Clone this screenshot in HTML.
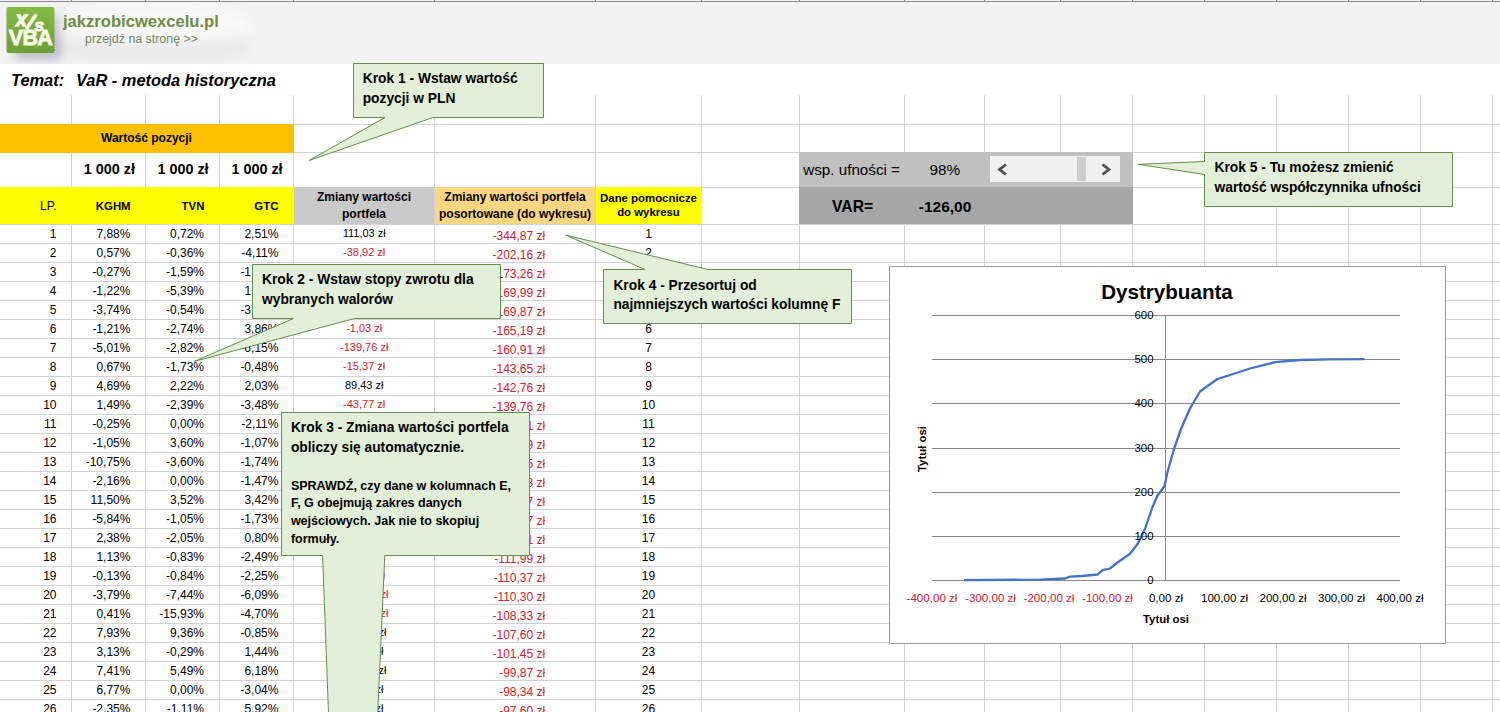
<!DOCTYPE html>
<html><head><meta charset="utf-8"><style>
html,body{margin:0;padding:0;}
body{width:1500px;height:712px;overflow:hidden;position:relative;background:#fff;font-family:"Liberation Sans", sans-serif;color:#000;}
.r{position:absolute;}
.t{position:absolute;white-space:nowrap;}
</style></head><body>
<div class="r" style="left:71px;top:95px;width:1px;height:617px;background:#d2d2d2;"></div>
<div class="r" style="left:145px;top:95px;width:1px;height:617px;background:#d2d2d2;"></div>
<div class="r" style="left:219px;top:95px;width:1px;height:617px;background:#d2d2d2;"></div>
<div class="r" style="left:293px;top:95px;width:1px;height:617px;background:#d2d2d2;"></div>
<div class="r" style="left:434px;top:95px;width:1px;height:617px;background:#d2d2d2;"></div>
<div class="r" style="left:595px;top:95px;width:1px;height:617px;background:#d2d2d2;"></div>
<div class="r" style="left:701px;top:95px;width:1px;height:617px;background:#d2d2d2;"></div>
<div class="r" style="left:799px;top:95px;width:1px;height:617px;background:#d2d2d2;"></div>
<div class="r" style="left:904px;top:95px;width:1px;height:617px;background:#d2d2d2;"></div>
<div class="r" style="left:984px;top:95px;width:1px;height:617px;background:#d2d2d2;"></div>
<div class="r" style="left:1060px;top:95px;width:1px;height:617px;background:#d2d2d2;"></div>
<div class="r" style="left:1132px;top:95px;width:1px;height:617px;background:#d2d2d2;"></div>
<div class="r" style="left:1204px;top:95px;width:1px;height:617px;background:#d2d2d2;"></div>
<div class="r" style="left:1276px;top:95px;width:1px;height:617px;background:#d2d2d2;"></div>
<div class="r" style="left:1348px;top:95px;width:1px;height:617px;background:#d2d2d2;"></div>
<div class="r" style="left:1420px;top:95px;width:1px;height:617px;background:#d2d2d2;"></div>
<div class="r" style="left:1492px;top:95px;width:1px;height:617px;background:#d2d2d2;"></div>
<div class="r" style="left:0px;top:124px;width:1500px;height:1px;background:#d2d2d2;"></div>
<div class="r" style="left:0px;top:152px;width:1500px;height:1px;background:#d2d2d2;"></div>
<div class="r" style="left:0px;top:187px;width:1500px;height:1px;background:#d2d2d2;"></div>
<div class="r" style="left:0px;top:224px;width:1500px;height:1px;background:#d2d2d2;"></div>
<div class="r" style="left:0px;top:243px;width:1500px;height:1px;background:#d2d2d2;"></div>
<div class="r" style="left:0px;top:262px;width:1500px;height:1px;background:#d2d2d2;"></div>
<div class="r" style="left:0px;top:281px;width:1500px;height:1px;background:#d2d2d2;"></div>
<div class="r" style="left:0px;top:300px;width:1500px;height:1px;background:#d2d2d2;"></div>
<div class="r" style="left:0px;top:319px;width:1500px;height:1px;background:#d2d2d2;"></div>
<div class="r" style="left:0px;top:338px;width:1500px;height:1px;background:#d2d2d2;"></div>
<div class="r" style="left:0px;top:357px;width:1500px;height:1px;background:#d2d2d2;"></div>
<div class="r" style="left:0px;top:376px;width:1500px;height:1px;background:#d2d2d2;"></div>
<div class="r" style="left:0px;top:395px;width:1500px;height:1px;background:#d2d2d2;"></div>
<div class="r" style="left:0px;top:414px;width:1500px;height:1px;background:#d2d2d2;"></div>
<div class="r" style="left:0px;top:433px;width:1500px;height:1px;background:#d2d2d2;"></div>
<div class="r" style="left:0px;top:452px;width:1500px;height:1px;background:#d2d2d2;"></div>
<div class="r" style="left:0px;top:471px;width:1500px;height:1px;background:#d2d2d2;"></div>
<div class="r" style="left:0px;top:490px;width:1500px;height:1px;background:#d2d2d2;"></div>
<div class="r" style="left:0px;top:509px;width:1500px;height:1px;background:#d2d2d2;"></div>
<div class="r" style="left:0px;top:528px;width:1500px;height:1px;background:#d2d2d2;"></div>
<div class="r" style="left:0px;top:547px;width:1500px;height:1px;background:#d2d2d2;"></div>
<div class="r" style="left:0px;top:566px;width:1500px;height:1px;background:#d2d2d2;"></div>
<div class="r" style="left:0px;top:585px;width:1500px;height:1px;background:#d2d2d2;"></div>
<div class="r" style="left:0px;top:604px;width:1500px;height:1px;background:#d2d2d2;"></div>
<div class="r" style="left:0px;top:623px;width:1500px;height:1px;background:#d2d2d2;"></div>
<div class="r" style="left:0px;top:642px;width:1500px;height:1px;background:#d2d2d2;"></div>
<div class="r" style="left:0px;top:661px;width:1500px;height:1px;background:#d2d2d2;"></div>
<div class="r" style="left:0px;top:680px;width:1500px;height:1px;background:#d2d2d2;"></div>
<div class="r" style="left:0px;top:699px;width:1500px;height:1px;background:#d2d2d2;"></div>
<div class="r" style="left:0px;top:0px;width:1500px;height:64px;background:#f2f2f2;"></div>
<div class="r" style="left:0px;top:1px;width:1500px;height:1px;background:#8c8c8c;"></div>
<div class="r" style="left:71px;top:0px;width:1px;height:2px;background:#8c8c8c;"></div>
<div class="r" style="left:145px;top:0px;width:1px;height:2px;background:#8c8c8c;"></div>
<div class="r" style="left:219px;top:0px;width:1px;height:2px;background:#8c8c8c;"></div>
<div class="r" style="left:293px;top:0px;width:1px;height:2px;background:#8c8c8c;"></div>
<div class="r" style="left:434px;top:0px;width:1px;height:2px;background:#8c8c8c;"></div>
<div class="r" style="left:595px;top:0px;width:1px;height:2px;background:#8c8c8c;"></div>
<div class="r" style="left:701px;top:0px;width:1px;height:2px;background:#8c8c8c;"></div>
<div class="r" style="left:799px;top:0px;width:1px;height:2px;background:#8c8c8c;"></div>
<div class="r" style="left:904px;top:0px;width:1px;height:2px;background:#8c8c8c;"></div>
<div class="r" style="left:984px;top:0px;width:1px;height:2px;background:#8c8c8c;"></div>
<div class="r" style="left:1060px;top:0px;width:1px;height:2px;background:#8c8c8c;"></div>
<div class="r" style="left:1132px;top:0px;width:1px;height:2px;background:#8c8c8c;"></div>
<div class="r" style="left:1204px;top:0px;width:1px;height:2px;background:#8c8c8c;"></div>
<div class="r" style="left:1276px;top:0px;width:1px;height:2px;background:#8c8c8c;"></div>
<div class="r" style="left:1348px;top:0px;width:1px;height:2px;background:#8c8c8c;"></div>
<div class="r" style="left:1420px;top:0px;width:1px;height:2px;background:#8c8c8c;"></div>
<div class="r" style="left:1492px;top:0px;width:1px;height:2px;background:#8c8c8c;"></div>
<div class="r" style="left:0px;top:124px;width:294px;height:29px;background:#ffc000;"></div>
<div class="r" style="left:0px;top:187px;width:294px;height:37px;background:#ffff00;"></div>
<div class="r" style="left:294px;top:187px;width:140px;height:37px;background:#c9c9c9;"></div>
<div class="r" style="left:435px;top:187px;width:160px;height:37px;background:#fbd57f;"></div>
<div class="r" style="left:596px;top:187px;width:106px;height:37px;background:#ffff00;"></div>
<div class="r" style="left:799px;top:152px;width:334px;height:35px;background:#c0c0c0;"></div>
<div class="r" style="left:799px;top:187px;width:334px;height:37px;background:#a6a6a6;"></div>
<div class="r" style="left:0;top:2px;width:1500px;height:62px;overflow:hidden;"><div style="position:absolute;left:14px;top:14px;width:48px;height:44px;border-radius:6px;background:rgba(110,110,150,0.38);filter:blur(5px);"></div><div style="position:absolute;left:60px;top:30px;width:190px;height:26px;border-radius:50%;background:rgba(140,140,140,0.12);filter:blur(8px);"></div><div style="position:absolute;left:55px;top:4px;width:200px;height:40px;border-radius:50%;background:rgba(255,255,255,0.6);filter:blur(8px);"></div></div>
<svg class="r" style="left:0;top:0" width="70" height="64"><defs><linearGradient id="lgG" x1="0" y1="0" x2="0" y2="1"><stop offset="0" stop-color="#86b846"/><stop offset="1" stop-color="#6f9f38"/></linearGradient></defs><rect x="6.5" y="7" width="48" height="46" rx="2.5" fill="url(#lgG)"/></svg>
<svg class="r" style="left:0;top:0" width="70" height="64"><text x="16" y="25.8" font-family="Liberation Sans" font-weight="bold" font-style="italic" font-size="19.5" fill="#f7fbe6" stroke="#f7fbe6" stroke-width="1.3">x</text><line x1="26.3" y1="29" x2="36.2" y2="14.5" stroke="#f7fbe6" stroke-width="3.6"/><text x="34.5" y="31" font-family="Liberation Sans" font-weight="bold" font-style="italic" font-size="17" fill="#f7fbe6" stroke="#f7fbe6" stroke-width="1.1">s</text><text x="30.5" y="44.7" text-anchor="middle" font-family="Liberation Sans" font-weight="bold" font-size="21.5" letter-spacing="-0.6" fill="#f7fbe6" stroke="#f7fbe6" stroke-width="0.8">VBA</text></svg>
<div class="t" style="top:12.25px;font-size:16.6px;line-height:20px;font-weight:bold;color:#6f8c40;left:63.00px;">jakzrobicwexcelu.pl</div>
<div class="t" style="top:32.20px;font-size:12.4px;line-height:15px;color:#718563;left:85.00px;">przejdź na stronę &gt;&gt;</div>
<div class="t" style="top:70.32px;font-size:16.4px;line-height:20px;font-weight:bold;font-style:italic;left:11.00px;">Temat:</div>
<div class="t" style="top:70.32px;font-size:16.4px;line-height:20px;font-weight:bold;font-style:italic;left:76.00px;">VaR - metoda historyczna</div>
<div class="t" style="top:130.84px;font-size:12px;line-height:14px;font-weight:bold;left:-153.50px;width:600px;text-align:center;">Wartość pozycji</div>
<div class="t" style="top:161.31px;font-size:14.4px;line-height:17px;font-weight:bold;right:1365.00px;text-align:right;">1 000 zł</div>
<div class="t" style="top:161.31px;font-size:14.4px;line-height:17px;font-weight:bold;right:1291.40px;text-align:right;">1 000 zł</div>
<div class="t" style="top:161.31px;font-size:14.4px;line-height:17px;font-weight:bold;right:1217.40px;text-align:right;">1 000 zł</div>
<div class="t" style="top:198.64px;font-size:12px;line-height:14px;right:1443.50px;text-align:right;">LP.</div>
<div class="t" style="top:198.75px;font-size:11.4px;line-height:14px;font-weight:bold;right:1369.40px;text-align:right;">KGHM</div>
<div class="t" style="top:198.75px;font-size:11.4px;line-height:14px;font-weight:bold;right:1295.60px;text-align:right;">TVN</div>
<div class="t" style="top:198.75px;font-size:11.4px;line-height:14px;font-weight:bold;right:1221.60px;text-align:right;">GTC</div>
<div class="t" style="top:190.34px;font-size:12px;line-height:14px;font-weight:bold;left:64.00px;width:600px;text-align:center;">Zmiany wartości</div>
<div class="t" style="top:207.34px;font-size:12px;line-height:14px;font-weight:bold;left:64.00px;width:600px;text-align:center;">portfela</div>
<div class="t" style="top:190.14px;font-size:12px;line-height:14px;font-weight:bold;left:215.00px;width:600px;text-align:center;">Zmiany wartości portfela</div>
<div class="t" style="top:207.04px;font-size:12px;line-height:14px;font-weight:bold;left:215.00px;width:600px;text-align:center;">posortowane (do wykresu)</div>
<div class="t" style="top:190.85px;font-size:11.4px;line-height:14px;font-weight:bold;left:348.50px;width:600px;text-align:center;">Dane pomocnicze</div>
<div class="t" style="top:205.25px;font-size:11.4px;line-height:14px;font-weight:bold;left:348.50px;width:600px;text-align:center;">do wykresu</div>
<div class="t" style="top:226.64px;font-size:12px;line-height:14px;right:1443.50px;text-align:right;">1</div>
<div class="t" style="top:226.64px;font-size:12px;line-height:14px;right:1369.60px;text-align:right;">7,88%</div>
<div class="t" style="top:226.64px;font-size:12px;line-height:14px;right:1296.00px;text-align:right;">0,72%</div>
<div class="t" style="top:226.64px;font-size:12px;line-height:14px;right:1221.60px;text-align:right;">2,51%</div>
<div class="t" style="top:227.19px;font-size:11px;line-height:13px;left:64.20px;width:600px;text-align:center;">111,03 zł</div>
<div class="t" style="top:228.64px;font-size:12px;line-height:14px;color:#cf2330;right:954.80px;text-align:right;">-344,87 zł</div>
<div class="t" style="top:226.64px;font-size:12px;line-height:14px;left:348.50px;width:600px;text-align:center;">1</div>
<div class="t" style="top:245.64px;font-size:12px;line-height:14px;right:1443.50px;text-align:right;">2</div>
<div class="t" style="top:245.64px;font-size:12px;line-height:14px;right:1369.60px;text-align:right;">0,57%</div>
<div class="t" style="top:245.64px;font-size:12px;line-height:14px;right:1296.00px;text-align:right;">-0,36%</div>
<div class="t" style="top:245.64px;font-size:12px;line-height:14px;right:1221.60px;text-align:right;">-4,11%</div>
<div class="t" style="top:246.19px;font-size:11px;line-height:13px;color:#cf2330;left:64.20px;width:600px;text-align:center;">-38,92 zł</div>
<div class="t" style="top:247.64px;font-size:12px;line-height:14px;color:#cf2330;right:954.80px;text-align:right;">-202,16 zł</div>
<div class="t" style="top:245.64px;font-size:12px;line-height:14px;left:348.50px;width:600px;text-align:center;">2</div>
<div class="t" style="top:264.64px;font-size:12px;line-height:14px;right:1443.50px;text-align:right;">3</div>
<div class="t" style="top:264.64px;font-size:12px;line-height:14px;right:1369.60px;text-align:right;">-0,27%</div>
<div class="t" style="top:264.64px;font-size:12px;line-height:14px;right:1296.00px;text-align:right;">-1,59%</div>
<div class="t" style="top:264.64px;font-size:12px;line-height:14px;right:1221.60px;text-align:right;">-1,52%</div>
<div class="t" style="top:265.19px;font-size:11px;line-height:13px;color:#cf2330;left:64.20px;width:600px;text-align:center;">-33,80 zł</div>
<div class="t" style="top:266.64px;font-size:12px;line-height:14px;color:#cf2330;right:954.80px;text-align:right;">-173,26 zł</div>
<div class="t" style="top:264.64px;font-size:12px;line-height:14px;left:348.50px;width:600px;text-align:center;">3</div>
<div class="t" style="top:283.64px;font-size:12px;line-height:14px;right:1443.50px;text-align:right;">4</div>
<div class="t" style="top:283.64px;font-size:12px;line-height:14px;right:1369.60px;text-align:right;">-1,22%</div>
<div class="t" style="top:283.64px;font-size:12px;line-height:14px;right:1296.00px;text-align:right;">-5,39%</div>
<div class="t" style="top:283.64px;font-size:12px;line-height:14px;right:1221.60px;text-align:right;">1,26%</div>
<div class="t" style="top:284.19px;font-size:11px;line-height:13px;color:#cf2330;left:64.20px;width:600px;text-align:center;">-53,50 zł</div>
<div class="t" style="top:285.64px;font-size:12px;line-height:14px;color:#cf2330;right:954.80px;text-align:right;">-169,99 zł</div>
<div class="t" style="top:283.64px;font-size:12px;line-height:14px;left:348.50px;width:600px;text-align:center;">4</div>
<div class="t" style="top:302.64px;font-size:12px;line-height:14px;right:1443.50px;text-align:right;">5</div>
<div class="t" style="top:302.64px;font-size:12px;line-height:14px;right:1369.60px;text-align:right;">-3,74%</div>
<div class="t" style="top:302.64px;font-size:12px;line-height:14px;right:1296.00px;text-align:right;">-0,54%</div>
<div class="t" style="top:302.64px;font-size:12px;line-height:14px;right:1221.60px;text-align:right;">-3,04%</div>
<div class="t" style="top:303.19px;font-size:11px;line-height:13px;color:#cf2330;left:64.20px;width:600px;text-align:center;">-73,20 zł</div>
<div class="t" style="top:304.64px;font-size:12px;line-height:14px;color:#cf2330;right:954.80px;text-align:right;">-169,87 zł</div>
<div class="t" style="top:302.64px;font-size:12px;line-height:14px;left:348.50px;width:600px;text-align:center;">5</div>
<div class="t" style="top:321.64px;font-size:12px;line-height:14px;right:1443.50px;text-align:right;">6</div>
<div class="t" style="top:321.64px;font-size:12px;line-height:14px;right:1369.60px;text-align:right;">-1,21%</div>
<div class="t" style="top:321.64px;font-size:12px;line-height:14px;right:1296.00px;text-align:right;">-2,74%</div>
<div class="t" style="top:321.64px;font-size:12px;line-height:14px;right:1221.60px;text-align:right;">3,86%</div>
<div class="t" style="top:322.19px;font-size:11px;line-height:13px;color:#cf2330;left:64.20px;width:600px;text-align:center;">-1,03 zł</div>
<div class="t" style="top:323.64px;font-size:12px;line-height:14px;color:#cf2330;right:954.80px;text-align:right;">-165,19 zł</div>
<div class="t" style="top:321.64px;font-size:12px;line-height:14px;left:348.50px;width:600px;text-align:center;">6</div>
<div class="t" style="top:340.64px;font-size:12px;line-height:14px;right:1443.50px;text-align:right;">7</div>
<div class="t" style="top:340.64px;font-size:12px;line-height:14px;right:1369.60px;text-align:right;">-5,01%</div>
<div class="t" style="top:340.64px;font-size:12px;line-height:14px;right:1296.00px;text-align:right;">-2,82%</div>
<div class="t" style="top:340.64px;font-size:12px;line-height:14px;right:1221.60px;text-align:right;">-6,15%</div>
<div class="t" style="top:341.19px;font-size:11px;line-height:13px;color:#cf2330;left:64.20px;width:600px;text-align:center;">-139,76 zł</div>
<div class="t" style="top:342.64px;font-size:12px;line-height:14px;color:#cf2330;right:954.80px;text-align:right;">-160,91 zł</div>
<div class="t" style="top:340.64px;font-size:12px;line-height:14px;left:348.50px;width:600px;text-align:center;">7</div>
<div class="t" style="top:359.64px;font-size:12px;line-height:14px;right:1443.50px;text-align:right;">8</div>
<div class="t" style="top:359.64px;font-size:12px;line-height:14px;right:1369.60px;text-align:right;">0,67%</div>
<div class="t" style="top:359.64px;font-size:12px;line-height:14px;right:1296.00px;text-align:right;">-1,73%</div>
<div class="t" style="top:359.64px;font-size:12px;line-height:14px;right:1221.60px;text-align:right;">-0,48%</div>
<div class="t" style="top:360.19px;font-size:11px;line-height:13px;color:#cf2330;left:64.20px;width:600px;text-align:center;">-15,37 zł</div>
<div class="t" style="top:361.64px;font-size:12px;line-height:14px;color:#cf2330;right:954.80px;text-align:right;">-143,65 zł</div>
<div class="t" style="top:359.64px;font-size:12px;line-height:14px;left:348.50px;width:600px;text-align:center;">8</div>
<div class="t" style="top:378.64px;font-size:12px;line-height:14px;right:1443.50px;text-align:right;">9</div>
<div class="t" style="top:378.64px;font-size:12px;line-height:14px;right:1369.60px;text-align:right;">4,69%</div>
<div class="t" style="top:378.64px;font-size:12px;line-height:14px;right:1296.00px;text-align:right;">2,22%</div>
<div class="t" style="top:378.64px;font-size:12px;line-height:14px;right:1221.60px;text-align:right;">2,03%</div>
<div class="t" style="top:379.19px;font-size:11px;line-height:13px;left:64.20px;width:600px;text-align:center;">89,43 zł</div>
<div class="t" style="top:380.64px;font-size:12px;line-height:14px;color:#cf2330;right:954.80px;text-align:right;">-142,76 zł</div>
<div class="t" style="top:378.64px;font-size:12px;line-height:14px;left:348.50px;width:600px;text-align:center;">9</div>
<div class="t" style="top:397.64px;font-size:12px;line-height:14px;right:1443.50px;text-align:right;">10</div>
<div class="t" style="top:397.64px;font-size:12px;line-height:14px;right:1369.60px;text-align:right;">1,49%</div>
<div class="t" style="top:397.64px;font-size:12px;line-height:14px;right:1296.00px;text-align:right;">-2,39%</div>
<div class="t" style="top:397.64px;font-size:12px;line-height:14px;right:1221.60px;text-align:right;">-3,48%</div>
<div class="t" style="top:398.19px;font-size:11px;line-height:13px;color:#cf2330;left:64.20px;width:600px;text-align:center;">-43,77 zł</div>
<div class="t" style="top:399.64px;font-size:12px;line-height:14px;color:#cf2330;right:954.80px;text-align:right;">-139,76 zł</div>
<div class="t" style="top:397.64px;font-size:12px;line-height:14px;left:348.50px;width:600px;text-align:center;">10</div>
<div class="t" style="top:416.64px;font-size:12px;line-height:14px;right:1443.50px;text-align:right;">11</div>
<div class="t" style="top:416.64px;font-size:12px;line-height:14px;right:1369.60px;text-align:right;">-0,25%</div>
<div class="t" style="top:416.64px;font-size:12px;line-height:14px;right:1296.00px;text-align:right;">0,00%</div>
<div class="t" style="top:416.64px;font-size:12px;line-height:14px;right:1221.60px;text-align:right;">-2,11%</div>
<div class="t" style="top:417.19px;font-size:11px;line-height:13px;color:#cf2330;left:64.20px;width:600px;text-align:center;">-23,60 zł</div>
<div class="t" style="top:418.64px;font-size:12px;line-height:14px;color:#cf2330;right:954.80px;text-align:right;">-136,41 zł</div>
<div class="t" style="top:416.64px;font-size:12px;line-height:14px;left:348.50px;width:600px;text-align:center;">11</div>
<div class="t" style="top:435.64px;font-size:12px;line-height:14px;right:1443.50px;text-align:right;">12</div>
<div class="t" style="top:435.64px;font-size:12px;line-height:14px;right:1369.60px;text-align:right;">-1,05%</div>
<div class="t" style="top:435.64px;font-size:12px;line-height:14px;right:1296.00px;text-align:right;">3,60%</div>
<div class="t" style="top:435.64px;font-size:12px;line-height:14px;right:1221.60px;text-align:right;">-1,07%</div>
<div class="t" style="top:436.19px;font-size:11px;line-height:13px;left:64.20px;width:600px;text-align:center;">14,80 zł</div>
<div class="t" style="top:437.64px;font-size:12px;line-height:14px;color:#cf2330;right:954.80px;text-align:right;">-133,19 zł</div>
<div class="t" style="top:435.64px;font-size:12px;line-height:14px;left:348.50px;width:600px;text-align:center;">12</div>
<div class="t" style="top:454.64px;font-size:12px;line-height:14px;right:1443.50px;text-align:right;">13</div>
<div class="t" style="top:454.64px;font-size:12px;line-height:14px;right:1369.60px;text-align:right;">-10,75%</div>
<div class="t" style="top:454.64px;font-size:12px;line-height:14px;right:1296.00px;text-align:right;">-3,60%</div>
<div class="t" style="top:454.64px;font-size:12px;line-height:14px;right:1221.60px;text-align:right;">-1,74%</div>
<div class="t" style="top:455.19px;font-size:11px;line-height:13px;color:#cf2330;left:64.20px;width:600px;text-align:center;">-160,90 zł</div>
<div class="t" style="top:456.64px;font-size:12px;line-height:14px;color:#cf2330;right:954.80px;text-align:right;">-129,05 zł</div>
<div class="t" style="top:454.64px;font-size:12px;line-height:14px;left:348.50px;width:600px;text-align:center;">13</div>
<div class="t" style="top:473.64px;font-size:12px;line-height:14px;right:1443.50px;text-align:right;">14</div>
<div class="t" style="top:473.64px;font-size:12px;line-height:14px;right:1369.60px;text-align:right;">-2,16%</div>
<div class="t" style="top:473.64px;font-size:12px;line-height:14px;right:1296.00px;text-align:right;">0,00%</div>
<div class="t" style="top:473.64px;font-size:12px;line-height:14px;right:1221.60px;text-align:right;">-1,47%</div>
<div class="t" style="top:474.19px;font-size:11px;line-height:13px;color:#cf2330;left:64.20px;width:600px;text-align:center;">-36,30 zł</div>
<div class="t" style="top:475.64px;font-size:12px;line-height:14px;color:#cf2330;right:954.80px;text-align:right;">-127,33 zł</div>
<div class="t" style="top:473.64px;font-size:12px;line-height:14px;left:348.50px;width:600px;text-align:center;">14</div>
<div class="t" style="top:492.64px;font-size:12px;line-height:14px;right:1443.50px;text-align:right;">15</div>
<div class="t" style="top:492.64px;font-size:12px;line-height:14px;right:1369.60px;text-align:right;">11,50%</div>
<div class="t" style="top:492.64px;font-size:12px;line-height:14px;right:1296.00px;text-align:right;">3,52%</div>
<div class="t" style="top:492.64px;font-size:12px;line-height:14px;right:1221.60px;text-align:right;">3,42%</div>
<div class="t" style="top:493.19px;font-size:11px;line-height:13px;left:64.20px;width:600px;text-align:center;">184,40 zł</div>
<div class="t" style="top:494.64px;font-size:12px;line-height:14px;color:#cf2330;right:954.80px;text-align:right;">-121,47 zł</div>
<div class="t" style="top:492.64px;font-size:12px;line-height:14px;left:348.50px;width:600px;text-align:center;">15</div>
<div class="t" style="top:511.64px;font-size:12px;line-height:14px;right:1443.50px;text-align:right;">16</div>
<div class="t" style="top:511.64px;font-size:12px;line-height:14px;right:1369.60px;text-align:right;">-5,84%</div>
<div class="t" style="top:511.64px;font-size:12px;line-height:14px;right:1296.00px;text-align:right;">-1,05%</div>
<div class="t" style="top:511.64px;font-size:12px;line-height:14px;right:1221.60px;text-align:right;">-1,73%</div>
<div class="t" style="top:512.19px;font-size:11px;line-height:13px;color:#cf2330;left:64.20px;width:600px;text-align:center;">-86,20 zł</div>
<div class="t" style="top:513.64px;font-size:12px;line-height:14px;color:#cf2330;right:954.80px;text-align:right;">-117,57 zł</div>
<div class="t" style="top:511.64px;font-size:12px;line-height:14px;left:348.50px;width:600px;text-align:center;">16</div>
<div class="t" style="top:530.64px;font-size:12px;line-height:14px;right:1443.50px;text-align:right;">17</div>
<div class="t" style="top:530.64px;font-size:12px;line-height:14px;right:1369.60px;text-align:right;">2,38%</div>
<div class="t" style="top:530.64px;font-size:12px;line-height:14px;right:1296.00px;text-align:right;">-2,05%</div>
<div class="t" style="top:530.64px;font-size:12px;line-height:14px;right:1221.60px;text-align:right;">0,80%</div>
<div class="t" style="top:531.19px;font-size:11px;line-height:13px;left:64.20px;width:600px;text-align:center;">11,30 zł</div>
<div class="t" style="top:532.64px;font-size:12px;line-height:14px;color:#cf2330;right:954.80px;text-align:right;">-114,21 zł</div>
<div class="t" style="top:530.64px;font-size:12px;line-height:14px;left:348.50px;width:600px;text-align:center;">17</div>
<div class="t" style="top:549.64px;font-size:12px;line-height:14px;right:1443.50px;text-align:right;">18</div>
<div class="t" style="top:549.64px;font-size:12px;line-height:14px;right:1369.60px;text-align:right;">1,13%</div>
<div class="t" style="top:549.64px;font-size:12px;line-height:14px;right:1296.00px;text-align:right;">-0,83%</div>
<div class="t" style="top:549.64px;font-size:12px;line-height:14px;right:1221.60px;text-align:right;">-2,49%</div>
<div class="t" style="top:550.19px;font-size:11px;line-height:13px;color:#cf2330;left:64.20px;width:600px;text-align:center;">-21,90 zł</div>
<div class="t" style="top:551.64px;font-size:12px;line-height:14px;color:#cf2330;right:954.80px;text-align:right;">-111,99 zł</div>
<div class="t" style="top:549.64px;font-size:12px;line-height:14px;left:348.50px;width:600px;text-align:center;">18</div>
<div class="t" style="top:568.64px;font-size:12px;line-height:14px;right:1443.50px;text-align:right;">19</div>
<div class="t" style="top:568.64px;font-size:12px;line-height:14px;right:1369.60px;text-align:right;">-0,13%</div>
<div class="t" style="top:568.64px;font-size:12px;line-height:14px;right:1296.00px;text-align:right;">-0,84%</div>
<div class="t" style="top:568.64px;font-size:12px;line-height:14px;right:1221.60px;text-align:right;">-2,25%</div>
<div class="t" style="top:569.19px;font-size:11px;line-height:13px;color:#cf2330;left:64.20px;width:600px;text-align:center;">-32,20 zł</div>
<div class="t" style="top:570.64px;font-size:12px;line-height:14px;color:#cf2330;right:954.80px;text-align:right;">-110,37 zł</div>
<div class="t" style="top:568.64px;font-size:12px;line-height:14px;left:348.50px;width:600px;text-align:center;">19</div>
<div class="t" style="top:587.64px;font-size:12px;line-height:14px;right:1443.50px;text-align:right;">20</div>
<div class="t" style="top:587.64px;font-size:12px;line-height:14px;right:1369.60px;text-align:right;">-3,79%</div>
<div class="t" style="top:587.64px;font-size:12px;line-height:14px;right:1296.00px;text-align:right;">-7,44%</div>
<div class="t" style="top:587.64px;font-size:12px;line-height:14px;right:1221.60px;text-align:right;">-6,09%</div>
<div class="t" style="top:588.19px;font-size:11px;line-height:13px;color:#cf2330;left:64.20px;width:600px;text-align:center;">-173,20 zł</div>
<div class="t" style="top:589.64px;font-size:12px;line-height:14px;color:#cf2330;right:954.80px;text-align:right;">-110,30 zł</div>
<div class="t" style="top:587.64px;font-size:12px;line-height:14px;left:348.50px;width:600px;text-align:center;">20</div>
<div class="t" style="top:606.64px;font-size:12px;line-height:14px;right:1443.50px;text-align:right;">21</div>
<div class="t" style="top:606.64px;font-size:12px;line-height:14px;right:1369.60px;text-align:right;">0,41%</div>
<div class="t" style="top:606.64px;font-size:12px;line-height:14px;right:1296.00px;text-align:right;">-15,93%</div>
<div class="t" style="top:606.64px;font-size:12px;line-height:14px;right:1221.60px;text-align:right;">-4,70%</div>
<div class="t" style="top:607.19px;font-size:11px;line-height:13px;color:#cf2330;left:64.20px;width:600px;text-align:center;">-202,20 zł</div>
<div class="t" style="top:608.64px;font-size:12px;line-height:14px;color:#cf2330;right:954.80px;text-align:right;">-108,33 zł</div>
<div class="t" style="top:606.64px;font-size:12px;line-height:14px;left:348.50px;width:600px;text-align:center;">21</div>
<div class="t" style="top:625.64px;font-size:12px;line-height:14px;right:1443.50px;text-align:right;">22</div>
<div class="t" style="top:625.64px;font-size:12px;line-height:14px;right:1369.60px;text-align:right;">7,93%</div>
<div class="t" style="top:625.64px;font-size:12px;line-height:14px;right:1296.00px;text-align:right;">9,36%</div>
<div class="t" style="top:625.64px;font-size:12px;line-height:14px;right:1221.60px;text-align:right;">-0,85%</div>
<div class="t" style="top:626.19px;font-size:11px;line-height:13px;left:64.20px;width:600px;text-align:center;">164,40 zł</div>
<div class="t" style="top:627.64px;font-size:12px;line-height:14px;color:#cf2330;right:954.80px;text-align:right;">-107,60 zł</div>
<div class="t" style="top:625.64px;font-size:12px;line-height:14px;left:348.50px;width:600px;text-align:center;">22</div>
<div class="t" style="top:644.64px;font-size:12px;line-height:14px;right:1443.50px;text-align:right;">23</div>
<div class="t" style="top:644.64px;font-size:12px;line-height:14px;right:1369.60px;text-align:right;">3,13%</div>
<div class="t" style="top:644.64px;font-size:12px;line-height:14px;right:1296.00px;text-align:right;">-0,29%</div>
<div class="t" style="top:644.64px;font-size:12px;line-height:14px;right:1221.60px;text-align:right;">1,44%</div>
<div class="t" style="top:645.19px;font-size:11px;line-height:13px;left:64.20px;width:600px;text-align:center;">42,80 zł</div>
<div class="t" style="top:646.64px;font-size:12px;line-height:14px;color:#cf2330;right:954.80px;text-align:right;">-101,45 zł</div>
<div class="t" style="top:644.64px;font-size:12px;line-height:14px;left:348.50px;width:600px;text-align:center;">23</div>
<div class="t" style="top:663.64px;font-size:12px;line-height:14px;right:1443.50px;text-align:right;">24</div>
<div class="t" style="top:663.64px;font-size:12px;line-height:14px;right:1369.60px;text-align:right;">7,41%</div>
<div class="t" style="top:663.64px;font-size:12px;line-height:14px;right:1296.00px;text-align:right;">5,49%</div>
<div class="t" style="top:663.64px;font-size:12px;line-height:14px;right:1221.60px;text-align:right;">6,18%</div>
<div class="t" style="top:664.19px;font-size:11px;line-height:13px;left:64.20px;width:600px;text-align:center;">190,80 zł</div>
<div class="t" style="top:665.64px;font-size:12px;line-height:14px;color:#cf2330;right:954.80px;text-align:right;">-99,87 zł</div>
<div class="t" style="top:663.64px;font-size:12px;line-height:14px;left:348.50px;width:600px;text-align:center;">24</div>
<div class="t" style="top:682.64px;font-size:12px;line-height:14px;right:1443.50px;text-align:right;">25</div>
<div class="t" style="top:682.64px;font-size:12px;line-height:14px;right:1369.60px;text-align:right;">6,77%</div>
<div class="t" style="top:682.64px;font-size:12px;line-height:14px;right:1296.00px;text-align:right;">0,00%</div>
<div class="t" style="top:682.64px;font-size:12px;line-height:14px;right:1221.60px;text-align:right;">-3,04%</div>
<div class="t" style="top:683.19px;font-size:11px;line-height:13px;left:64.20px;width:600px;text-align:center;">37,30 zł</div>
<div class="t" style="top:684.64px;font-size:12px;line-height:14px;color:#cf2330;right:954.80px;text-align:right;">-98,34 zł</div>
<div class="t" style="top:682.64px;font-size:12px;line-height:14px;left:348.50px;width:600px;text-align:center;">25</div>
<div class="t" style="top:701.64px;font-size:12px;line-height:14px;right:1443.50px;text-align:right;">26</div>
<div class="t" style="top:701.64px;font-size:12px;line-height:14px;right:1369.60px;text-align:right;">-2,35%</div>
<div class="t" style="top:701.64px;font-size:12px;line-height:14px;right:1296.00px;text-align:right;">-1,11%</div>
<div class="t" style="top:701.64px;font-size:12px;line-height:14px;right:1221.60px;text-align:right;">5,92%</div>
<div class="t" style="top:702.19px;font-size:11px;line-height:13px;left:64.20px;width:600px;text-align:center;">24,60 zł</div>
<div class="t" style="top:703.64px;font-size:12px;line-height:14px;color:#cf2330;right:954.80px;text-align:right;">-97,60 zł</div>
<div class="t" style="top:701.64px;font-size:12px;line-height:14px;left:348.50px;width:600px;text-align:center;">26</div>
<div class="t" style="top:161.03px;font-size:15.2px;line-height:18px;left:803.30px;">wsp. ufności =</div>
<div class="t" style="top:161.00px;font-size:15.3px;line-height:18px;right:540.00px;text-align:right;">98%</div>
<div class="t" style="top:196.66px;font-size:15.7px;line-height:19px;font-weight:bold;left:832.00px;">VAR=</div>
<div class="t" style="top:196.73px;font-size:15.5px;line-height:19px;font-weight:bold;right:528.70px;text-align:right;">-126,00</div>
<div class="r" style="left:990px;top:156px;width:130px;height:26px;background:#f0f0f0;"></div>
<div class="r" style="left:1077px;top:157px;width:9px;height:24px;background:#cdcdcd;"></div>
<svg class="r" style="left:0;top:0" width="1500" height="712"><path d="M1006,164.5 L999.5,169.5 L1006,174.5" fill="none" stroke="#505050" stroke-width="2.8"/><path d="M1102.5,164.5 L1109,169.5 L1102.5,174.5" fill="none" stroke="#505050" stroke-width="2.8"/></svg>
<svg class="r" style="left:0;top:0" width="1500" height="712">
<rect x="889.5" y="266.5" width="556" height="377" fill="#fff" stroke="#9a9a9a" stroke-width="1"/>
<line x1="932" y1="580.50" x2="1400" y2="580.50" stroke="#868686" stroke-width="1"/>
<line x1="932" y1="536.50" x2="1400" y2="536.50" stroke="#868686" stroke-width="1"/>
<line x1="932" y1="492.50" x2="1400" y2="492.50" stroke="#868686" stroke-width="1"/>
<line x1="932" y1="448.50" x2="1400" y2="448.50" stroke="#868686" stroke-width="1"/>
<line x1="932" y1="403.50" x2="1400" y2="403.50" stroke="#868686" stroke-width="1"/>
<line x1="932" y1="359.50" x2="1400" y2="359.50" stroke="#868686" stroke-width="1"/>
<line x1="932" y1="315.50" x2="1400" y2="315.50" stroke="#868686" stroke-width="1"/>
<line x1="1165.5" y1="315" x2="1165.5" y2="581" stroke="#868686" stroke-width="1"/>
<polyline fill="none" stroke="#4472c4" stroke-width="2.3" stroke-linejoin="round" points="964,580.2 1040,579.6 1065,578.5 1070,576.6 1082,576 1097.5,574.5 1102.5,570.2 1110,568.5 1117.5,562.5 1130,553.8 1137.5,544 1145,529 1152.5,507 1157.5,495.5 1162,489.5 1164.5,486 1167.5,472 1174,449 1181,429 1190,408.5 1200,391.5 1207.5,386 1217.5,379 1230,375 1250,368.5 1275,362.2 1300,360 1330,359.3 1364.5,359.2"/>
</svg>
<div class="t" style="top:279.06px;font-size:20.6px;line-height:25px;font-weight:bold;left:867.00px;width:600px;text-align:center;">Dystrybuanta</div>
<div class="t" style="top:573.35px;font-size:11.4px;line-height:14px;right:346.50px;text-align:right;">0</div>
<div class="t" style="top:529.35px;font-size:11.4px;line-height:14px;right:346.50px;text-align:right;">100</div>
<div class="t" style="top:485.35px;font-size:11.4px;line-height:14px;right:346.50px;text-align:right;">200</div>
<div class="t" style="top:441.35px;font-size:11.4px;line-height:14px;right:346.50px;text-align:right;">300</div>
<div class="t" style="top:396.35px;font-size:11.4px;line-height:14px;right:346.50px;text-align:right;">400</div>
<div class="t" style="top:352.35px;font-size:11.4px;line-height:14px;right:346.50px;text-align:right;">500</div>
<div class="t" style="top:308.35px;font-size:11.4px;line-height:14px;right:346.50px;text-align:right;">600</div>
<div class="t" style="top:590.68px;font-size:11.6px;line-height:14px;color:#cf2330;left:632.00px;width:600px;text-align:center;">-400,00 zł</div>
<div class="t" style="top:590.68px;font-size:11.6px;line-height:14px;color:#cf2330;left:690.50px;width:600px;text-align:center;">-300,00 zł</div>
<div class="t" style="top:590.68px;font-size:11.6px;line-height:14px;color:#cf2330;left:749.00px;width:600px;text-align:center;">-200,00 zł</div>
<div class="t" style="top:590.68px;font-size:11.6px;line-height:14px;color:#cf2330;left:807.50px;width:600px;text-align:center;">-100,00 zł</div>
<div class="t" style="top:590.68px;font-size:11.6px;line-height:14px;left:866.00px;width:600px;text-align:center;">0,00 zł</div>
<div class="t" style="top:590.68px;font-size:11.6px;line-height:14px;left:924.50px;width:600px;text-align:center;">100,00 zł</div>
<div class="t" style="top:590.68px;font-size:11.6px;line-height:14px;left:983.00px;width:600px;text-align:center;">200,00 zł</div>
<div class="t" style="top:590.68px;font-size:11.6px;line-height:14px;left:1041.50px;width:600px;text-align:center;">300,00 zł</div>
<div class="t" style="top:590.68px;font-size:11.6px;line-height:14px;left:1100.00px;width:600px;text-align:center;">400,00 zł</div>
<div class="t" style="top:611.75px;font-size:11.4px;line-height:14px;font-weight:bold;left:866.00px;width:600px;text-align:center;">Tytuł osi</div>
<div class="t" style="left:922px;top:448.5px;width:0;height:0;"><div style="position:absolute;left:-100px;top:-7px;width:200px;height:14px;line-height:14px;font-size:11.4px;font-weight:bold;text-align:center;transform:rotate(-90deg);">Tytuł osi</div></div>
<svg class="r" style="left:0;top:0" width="1500" height="712">
<polygon points="353.5,63.5 543.5,63.5 543.5,117.5 433,117.5 309,160.5 385,117.5 353.5,117.5" fill="#e2efd9" stroke="#63904c" stroke-width="1"/>
<polygon points="252.5,264.5 500.5,264.5 500.5,318.5 354.5,318.5 194,361.5 293.5,318.5 252.5,318.5" fill="#e2efd9" stroke="#63904c" stroke-width="1"/>
<polygon points="281.5,412.5 529.5,412.5 529.5,555.5 384.8,555.5 376.5,740 329.5,740 322.6,555.5 281.5,555.5" fill="#e2efd9" stroke="#63904c" stroke-width="1"/>
<polygon points="603.5,269.5 645,269.5 565.4,235 708,269.5 851.5,269.5 851.5,323.5 603.5,323.5" fill="#e2efd9" stroke="#63904c" stroke-width="1"/>
<polygon points="1204.5,152.5 1452.5,152.5 1452.5,206.5 1204.5,206.5 1204.5,174.5 1138.2,164.3 1204.5,161.5" fill="#e2efd9" stroke="#63904c" stroke-width="1"/>
</svg>
<div class="t" style="top:70.32px;font-size:13.8px;line-height:17px;font-weight:bold;left:362.70px;">Krok 1 - Wstaw wartość</div>
<div class="t" style="top:90.32px;font-size:13.8px;line-height:17px;font-weight:bold;left:362.70px;">pozycji w PLN</div>
<div class="t" style="top:271.42px;font-size:13.8px;line-height:17px;font-weight:bold;left:262.00px;">Krok 2 - Wstaw stopy zwrotu dla</div>
<div class="t" style="top:290.92px;font-size:13.8px;line-height:17px;font-weight:bold;left:262.00px;">wybranych walorów</div>
<div class="t" style="top:419.22px;font-size:13.8px;line-height:17px;font-weight:bold;left:290.90px;">Krok 3 - Zmiana wartości portfela</div>
<div class="t" style="top:439.42px;font-size:13.8px;line-height:17px;font-weight:bold;left:290.90px;">obliczy się automatycznie.</div>
<div class="t" style="top:479.07px;font-size:12.5px;line-height:15px;font-weight:bold;left:290.90px;">SPRAWDŹ, czy dane w kolumnach E,</div>
<div class="t" style="top:496.47px;font-size:12.5px;line-height:15px;font-weight:bold;left:290.90px;">F, G obejmują zakres danych</div>
<div class="t" style="top:513.87px;font-size:12.5px;line-height:15px;font-weight:bold;left:290.90px;">wejściowych. Jak nie to skopiuj</div>
<div class="t" style="top:532.37px;font-size:12.5px;line-height:15px;font-weight:bold;left:290.90px;">formuły.</div>
<div class="t" style="top:276.62px;font-size:13.8px;line-height:17px;font-weight:bold;left:613.40px;">Krok 4 - Przesortuj od</div>
<div class="t" style="top:296.42px;font-size:13.8px;line-height:17px;font-weight:bold;left:613.40px;">najmniejszych wartości kolumnę F</div>
<div class="t" style="top:159.12px;font-size:13.8px;line-height:17px;font-weight:bold;left:1214.50px;">Krok 5 - Tu możesz zmienić</div>
<div class="t" style="top:179.42px;font-size:13.8px;line-height:17px;font-weight:bold;left:1214.50px;">wartość współczynnika ufności</div>
</body></html>
